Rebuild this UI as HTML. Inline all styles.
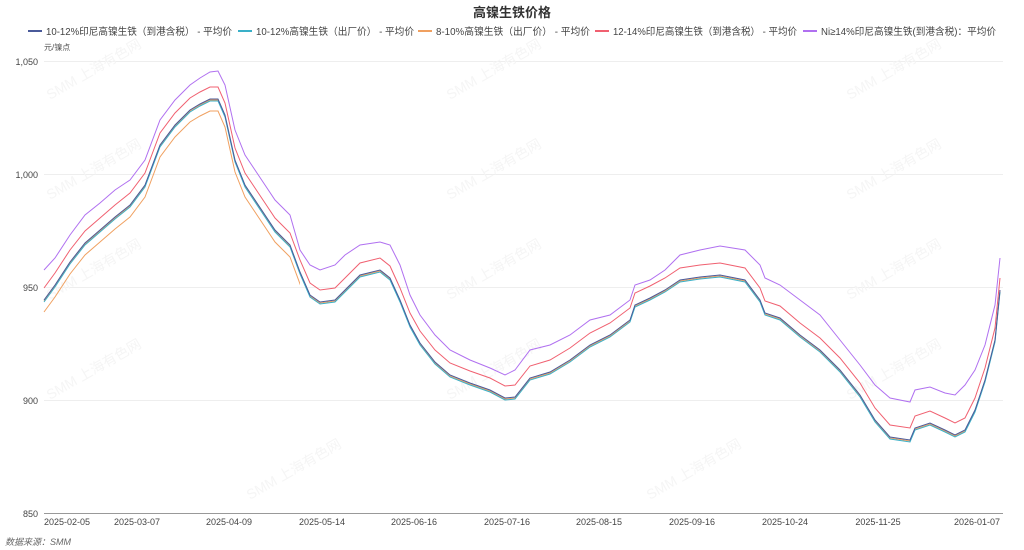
<!DOCTYPE html>
<html><head><meta charset="utf-8"><style>
html,body{margin:0;padding:0;background:#fff;}
svg{display:block;font-family:"Liberation Sans","Noto Sans CJK SC",sans-serif;}
</style></head><body>
<svg width="1024" height="550" viewBox="0 0 1024 550" xmlns="http://www.w3.org/2000/svg">
<defs>
<clipPath id="cl"><rect x="0" y="0" width="300" height="550"/></clipPath>
<polyline id="nv" fill="none" points="44,300 55,285 70,262 85,243 100,230 115,217 130,205 145,185 160,145 175,125 190,110 200,104 210,99 218,99 225,115 235,160 245,185 255,200 265,215 275,230 290,245 300,272 310,295 320,302 335,300 345,290 360,275 380,270 390,278 400,300 410,325 420,343 435,362 450,375 470,383 490,390 505,398 515,397 530,378 550,372 570,360 590,345 610,335 630,320 635,305 650,298 665,290 680,280 700,277 720,275 745,280 760,300 765,313 780,318 800,335 820,350 840,370 860,395 875,420 890,437 910,440 915,428 930,423 945,430 955,435 965,430 975,410 985,380 995,340 1000,290"/>
</defs>
<text x="512" y="17" text-anchor="middle" font-size="13" font-weight="bold" fill="#333">高镍生铁价格</text>
<g font-size="10" fill="#444">
<line x1="28" y1="31" x2="42" y2="31" stroke="#4a5a9a" stroke-width="2"/>
<text x="46" y="35" textLength="186" lengthAdjust="spacingAndGlyphs">10-12%印尼高镍生铁（到港含税） - 平均价</text>
<line x1="238" y1="31" x2="252" y2="31" stroke="#3ab0c8" stroke-width="2"/>
<text x="256" y="35" textLength="158" lengthAdjust="spacingAndGlyphs">10-12%高镍生铁（出厂价） - 平均价</text>
<line x1="418" y1="31" x2="432" y2="31" stroke="#f0a060" stroke-width="2"/>
<text x="436" y="35" textLength="154" lengthAdjust="spacingAndGlyphs">8-10%高镍生铁（出厂价） - 平均价</text>
<line x1="595" y1="31" x2="609" y2="31" stroke="#f06070" stroke-width="2"/>
<text x="613" y="35" textLength="184" lengthAdjust="spacingAndGlyphs">12-14%印尼高镍生铁（到港含税） - 平均价</text>
<line x1="803" y1="31" x2="817" y2="31" stroke="#b070f0" stroke-width="2"/>
<text x="821" y="35" textLength="175" lengthAdjust="spacingAndGlyphs">Ni≥14%印尼高镍生铁(到港含税)：平均价</text>
</g>
<text x="44" y="50" font-size="8" fill="#555">元/镍点</text>
<g stroke="#eee" stroke-width="1">
<line x1="44" y1="61.5" x2="1003" y2="61.5"/><line x1="44" y1="174.5" x2="1003" y2="174.5"/>
<line x1="44" y1="287.5" x2="1003" y2="287.5"/><line x1="44" y1="400.5" x2="1003" y2="400.5"/>
</g>
<line x1="44" y1="513.5" x2="1003" y2="513.5" stroke="#999"/>
<g font-size="9" fill="#444" text-anchor="end">
<text x="38" y="65">1,050</text><text x="38" y="178">1,000</text><text x="38" y="291">950</text><text x="38" y="404">900</text><text x="38" y="517">850</text>
</g>
<g font-size="9" fill="#444" text-anchor="middle">
<text x="67" y="525">2025-02-05</text><text x="137" y="525">2025-03-07</text><text x="229" y="525">2025-04-09</text><text x="322" y="525">2025-05-14</text><text x="414" y="525">2025-06-16</text><text x="507" y="525">2025-07-16</text><text x="599" y="525">2025-08-15</text><text x="692" y="525">2025-09-16</text><text x="785" y="525">2025-10-24</text><text x="878" y="525">2025-11-25</text><text x="977" y="525">2026-01-07</text>
</g>
<text x="5" y="545" font-size="9" font-style="italic" fill="#666">数据来源：SMM</text>
<g font-size="14" fill="#f5f5f5">
<text transform="translate(50,100) rotate(-30)">SMM 上海有色网</text>
<text transform="translate(450,100) rotate(-30)">SMM 上海有色网</text>
<text transform="translate(850,100) rotate(-30)">SMM 上海有色网</text>
<text transform="translate(50,200) rotate(-30)">SMM 上海有色网</text>
<text transform="translate(450,200) rotate(-30)">SMM 上海有色网</text>
<text transform="translate(850,200) rotate(-30)">SMM 上海有色网</text>
<text transform="translate(50,300) rotate(-30)">SMM 上海有色网</text>
<text transform="translate(450,300) rotate(-30)">SMM 上海有色网</text>
<text transform="translate(850,300) rotate(-30)">SMM 上海有色网</text>
<text transform="translate(50,400) rotate(-30)">SMM 上海有色网</text>
<text transform="translate(450,400) rotate(-30)">SMM 上海有色网</text>
<text transform="translate(850,400) rotate(-30)">SMM 上海有色网</text>
<text transform="translate(250,500) rotate(-30)">SMM 上海有色网</text>
<text transform="translate(650,500) rotate(-30)">SMM 上海有色网</text>
</g>
<use href="#nv" stroke="#f0a060" stroke-width="1" transform="translate(0,12)" clip-path="url(#cl)"/>
<use href="#nv" stroke="#f0a060" stroke-width="1" transform="translate(0,1)"/>
<use href="#nv" stroke="#f06070" stroke-width="1" transform="translate(0,-12)"/>
<use href="#nv" stroke="#3ab0c8" stroke-width="1" transform="translate(0,2)"/>
<use href="#nv" stroke="#4a5a9a" stroke-width="1"/>
<polyline fill="none" stroke="#b070f0" stroke-width="1" points="44,270 55,258 70,235 85,215 100,203 115,190 130,180 145,160 160,120 175,100 190,85 200,78 210,72 218,71 225,85 235,130 245,155 255,170 265,185 275,200 290,215 300,250 310,265 320,270 335,265 345,255 360,245 380,242 390,245 400,265 410,295 420,315 435,335 450,350 470,360 490,368 505,375 515,370 530,350 550,345 570,335 590,320 610,315 630,300 635,285 650,280 665,270 680,255 700,250 720,246 745,250 760,265 765,278 780,285 800,300 820,315 840,340 860,365 875,385 890,398 910,402 915,390 930,387 945,393 955,395 965,385 975,370 985,345 995,305 1000,258"/>
</svg>
</body></html>
